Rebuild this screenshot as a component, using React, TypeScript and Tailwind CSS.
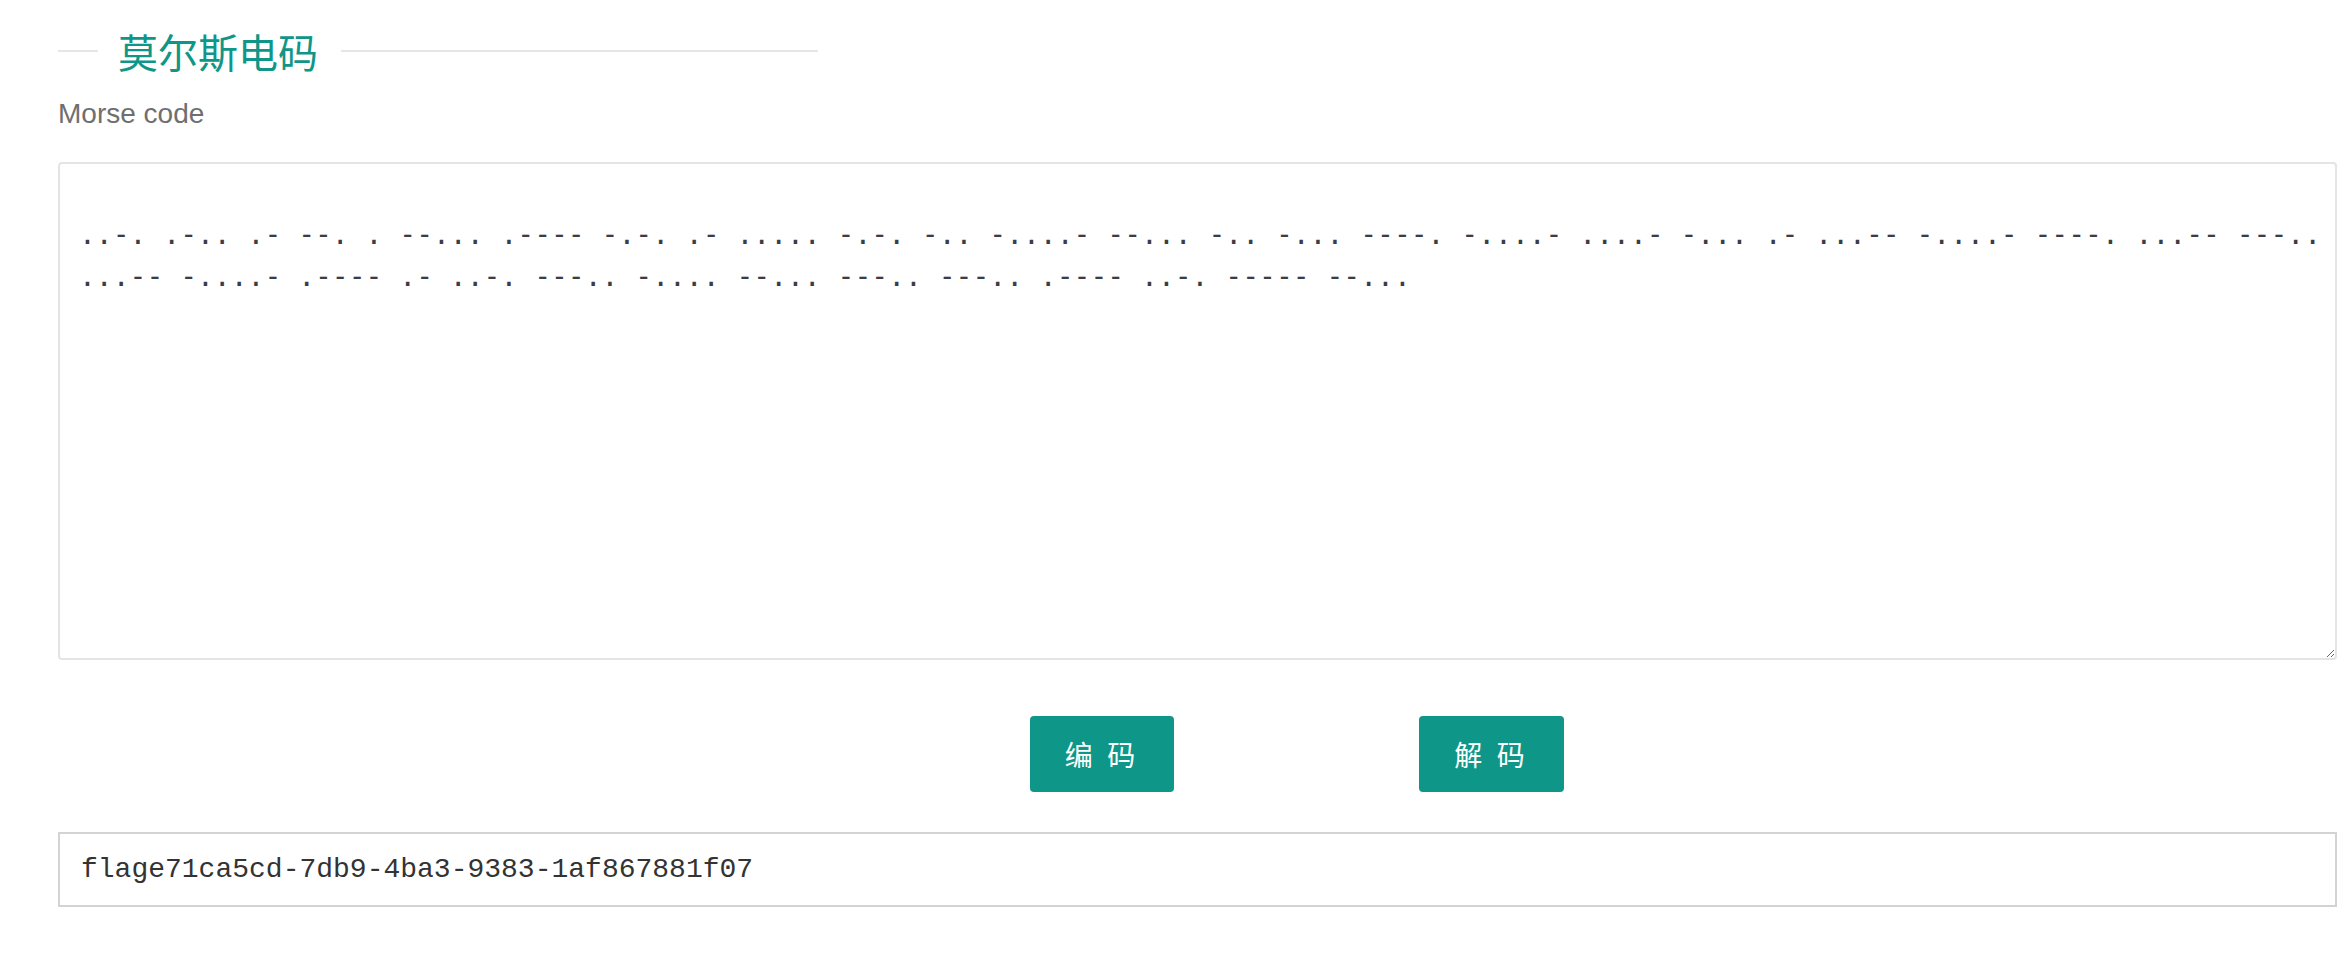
const morse =
  "..-. .-.. .- --. . --... .---- -.-. .- ..... -.-. -.. -....- --... -.. -... ----. -....- ....- -... .- ...-- -....- ----. ...-- ---.. ...-- -....- .---- .- ..-. ---.. -.... --... ---.. ---.. .---- ..-. ----- --...";

export default function App() {
  return (
    <div className="min-h-screen bg-white pl-[58px] pr-[5px] pt-[27px]">
      {/* title */}
      <div className="flex h-[48px] w-[760px] items-center">
        <div className="h-[2px] w-[40px] bg-[#e6e6e6]" />
        <h2 className="ml-[20px] font-['Noto_Sans_CJK_SC',sans-serif] text-[40px] leading-[48px] font-normal text-[#0f9688]">
          莫尔斯电码
        </h2>
        <div className="ml-[23px] h-[2px] flex-1 bg-[#e6e6e6]" />
      </div>

      <div className="mt-[18px] font-['Liberation_Sans',sans-serif] text-[28px] leading-[42px] text-[#6f6f6f]">
        Morse code
      </div>

      <textarea
        className="mt-[27px] block h-[498px] w-full resize-y rounded-[4px] border-2 border-[#e4e4e4] pl-[19px] pr-[6px] pt-[50px] font-['DejaVu_Sans_Mono',monospace] text-[28px] leading-[42px] text-[#3a3d46] outline-none"
        defaultValue={morse}
        spellCheck={false}
      />

      <div className="mt-[56px] flex pl-[972px]">
        <button className="h-[76px] w-[144px] rounded-[4px] bg-[#0e9688] font-['Noto_Sans_CJK_SC',sans-serif] text-[28px] tracking-[4px] text-white">
          编 码
        </button>
        <button className="ml-[245px] h-[76px] w-[145px] rounded-[4px] bg-[#0e9688] font-['Noto_Sans_CJK_SC',sans-serif] text-[28px] tracking-[4px] text-white">
          解 码
        </button>
      </div>

      <div className="mt-[40px] flex h-[75px] items-center border-2 border-[#d3d3d3] pl-[21px] font-['Liberation_Mono',monospace] text-[28px] text-[#333333]">
        flage71ca5cd-7db9-4ba3-9383-1af867881f07
      </div>
    </div>
  );
}
